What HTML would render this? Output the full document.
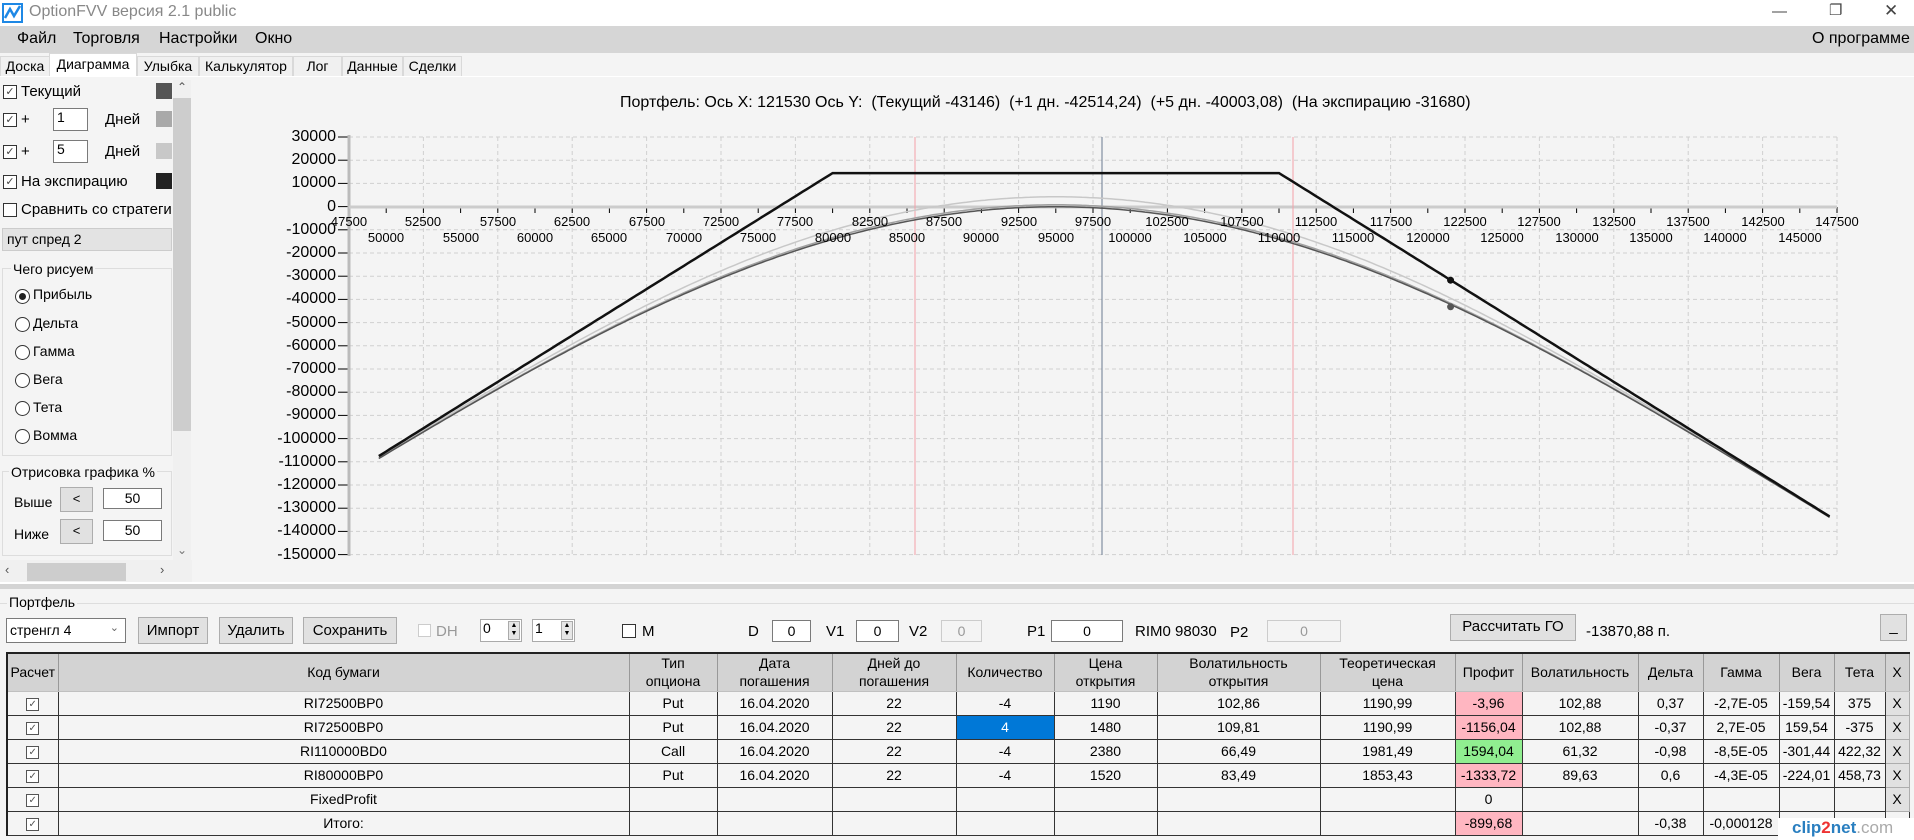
<!DOCTYPE html>
<html><head><meta charset="utf-8">
<style>
*{box-sizing:border-box;margin:0;padding:0}
body{width:1914px;height:840px;overflow:hidden;background:#f4f4f4;font-family:"Liberation Sans",sans-serif;font-size:15px;color:#000;position:relative}
.a{position:absolute;white-space:nowrap}
.cb{position:absolute;width:14px;height:14px;border:1px solid #333;background:#fff;font-size:11px;line-height:12px;text-align:center;color:#444}
.rb{position:absolute;width:15px;height:15px;border:1px solid #333;border-radius:50%;background:#fff}
.btn{position:absolute;background:#e1e1e1;border:1px solid #adadad;text-align:center;font-size:15px}
.inp{position:absolute;background:#fff;border:1px solid #7a7a7a;font-size:14px}
.yl{position:absolute;left:270px;width:66px;text-align:right;font-size:16px;height:18px;line-height:18px}
.xl{position:absolute;width:80px;text-align:center;font-size:13px;height:16px;line-height:16px}
.tab{position:absolute;top:56px;height:20px;border:1px solid #d9d9d9;border-bottom:none;font-size:14px;line-height:19px;text-align:center;background:#f0f0f0}
table{position:absolute;left:6px;top:652px;border-collapse:collapse;font-size:14px;border-top:2px solid #222;border-left:2px solid #222}
td{border:1px solid #333;text-align:center;height:24px;padding:0;background:#f4f4f4}
tr.h td{background:#d3d3d3;height:38px;line-height:18px;border-color:#fff #c0c0c0 #c0c0c0 #c0c0c0;border-right:1px solid #999}
.pk{background:#ffb6c1!important}.gr{background:#90ee90!important}.bl{background:#0078d7!important;color:#fff}
.xb{background:#e1e1e1!important;border:1px solid #adadad}
.chk{display:inline-block;width:13px;height:13px;border:1px solid #555;background:#fff;font-size:10px;line-height:11px;color:#555;vertical-align:middle}
</style></head><body>
<!-- title bar -->
<div class="a" style="left:0;top:0;width:1914px;height:26px;background:#fff"></div>
<svg class="a" style="left:2px;top:3px" width="22" height="20"><rect x="1" y="1" width="19" height="18" fill="none" stroke="#1e88e5" stroke-width="2"/><path d="M3 15 L8 6 L12 13 L18 3" fill="none" stroke="#1e88e5" stroke-width="2.5"/></svg>
<div class="a" style="left:29px;top:3px;font-size:16px;color:#888">OptionFVV версия 2.1 public</div>
<div class="a" style="left:1772px;top:3px;font-size:15px;color:#444">&#8212;</div>
<div class="a" style="left:1829px;top:1px;font-size:15px;color:#444">&#10064;</div>
<div class="a" style="left:1884px;top:1px;font-size:17px;color:#444">&#10005;</div>
<!-- menu -->
<div class="a" style="left:0;top:26px;width:1914px;height:27px;background:#d6d6d6"></div>
<div class="a" style="left:17px;top:30px;font-size:16px">Файл</div>
<div class="a" style="left:73px;top:30px;font-size:16px">Торговля</div>
<div class="a" style="left:159px;top:30px;font-size:16px">Настройки</div>
<div class="a" style="left:255px;top:30px;font-size:16px">Окно</div>
<div class="a" style="left:1812px;top:30px;font-size:16px">О программе</div>
<!-- tabs -->
<div class="tab" style="left:0;width:50px">Доска</div>
<div class="tab" style="left:49px;width:88px;top:53px;height:24px;background:#fff;line-height:20px">Диаграмма</div>
<div class="tab" style="left:137px;width:62px">Улыбка</div>
<div class="tab" style="left:199px;width:94px">Калькулятор</div>
<div class="tab" style="left:293px;width:49px">Лог</div>
<div class="tab" style="left:342px;width:61px">Данные</div>
<div class="tab" style="left:403px;width:59px">Сделки</div>
<div class="a" style="left:0;top:76px;width:1914px;height:1px;background:#fff"></div>
<!-- left panel -->
<div class="cb" style="left:3px;top:85px">&#10003;</div><div class="a" style="left:21px;top:83px">Текущий</div>
<div class="a" style="left:156px;top:83px;width:16px;height:16px;background:#555"></div>
<div class="cb" style="left:3px;top:113px">&#10003;</div><div class="a" style="left:21px;top:111px">+</div>
<div class="inp" style="left:53px;top:108px;width:35px;height:23px;padding-left:3px">1</div><div class="a" style="left:105px;top:111px">Дней</div>
<div class="a" style="left:156px;top:111px;width:16px;height:16px;background:#a9a9a9"></div>
<div class="cb" style="left:3px;top:145px">&#10003;</div><div class="a" style="left:21px;top:143px">+</div>
<div class="inp" style="left:53px;top:140px;width:35px;height:23px;padding-left:3px">5</div><div class="a" style="left:105px;top:143px">Дней</div>
<div class="a" style="left:156px;top:143px;width:16px;height:16px;background:#c8c8c8"></div>
<div class="cb" style="left:3px;top:175px">&#10003;</div><div class="a" style="left:21px;top:173px">На экспирацию</div>
<div class="a" style="left:156px;top:173px;width:16px;height:16px;background:#222"></div>
<div class="cb" style="left:3px;top:203px"></div><div class="a" style="left:21px;top:201px;width:151px;overflow:hidden">Сравнить со стратегие</div>
<div class="a" style="left:2px;top:228px;width:170px;height:23px;background:#e3e3e3;border:1px solid #ccc;padding:2px 4px;font-size:14px">пут спред 2</div>
<div class="a" style="left:2px;top:268px;width:170px;height:188px;border:1px solid #ddd"></div>
<div class="a" style="left:11px;top:261px;background:#f4f4f4;font-size:14px;padding:0 2px">Чего рисуем</div>
<div class="rb" style="left:15px;top:289px"></div><div class="a" style="left:19px;top:293px;width:7px;height:7px;border-radius:50%;background:#222"></div><div class="a" style="left:33px;top:286px;font-size:14px">Прибыль</div>
<div class="rb" style="left:15px;top:317px"></div><div class="a" style="left:33px;top:315px;font-size:14px">Дельта</div>
<div class="rb" style="left:15px;top:345px"></div><div class="a" style="left:33px;top:343px;font-size:14px">Гамма</div>
<div class="rb" style="left:15px;top:373px"></div><div class="a" style="left:33px;top:371px;font-size:14px">Вега</div>
<div class="rb" style="left:15px;top:401px"></div><div class="a" style="left:33px;top:399px;font-size:14px">Тета</div>
<div class="rb" style="left:15px;top:429px"></div><div class="a" style="left:33px;top:427px;font-size:14px">Вомма</div>
<div class="a" style="left:2px;top:471px;width:170px;height:85px;border:1px solid #ddd"></div>
<div class="a" style="left:9px;top:464px;background:#f4f4f4;font-size:14px;padding:0 2px">Отрисовка графика %</div>
<div class="a" style="left:14px;top:494px;font-size:14px">Выше</div>
<div class="btn" style="left:60px;top:487px;width:33px;height:25px;line-height:22px;font-size:13px">&lt;</div>
<div class="inp" style="left:103px;top:488px;width:59px;height:21px;text-align:center;line-height:19px">50</div>
<div class="a" style="left:14px;top:526px;font-size:14px">Ниже</div>
<div class="btn" style="left:60px;top:519px;width:33px;height:25px;line-height:22px;font-size:13px">&lt;</div>
<div class="inp" style="left:103px;top:520px;width:59px;height:21px;text-align:center;line-height:19px">50</div>
<div class="a" style="left:173px;top:80px;width:18px;height:480px;background:#f0f0f0"></div>
<div class="a" style="left:173px;top:98px;width:18px;height:333px;background:#cdcdcd"></div>
<div class="a" style="left:177px;top:80px;font-size:12px;color:#555">&#8963;</div>
<div class="a" style="left:177px;top:543px;font-size:12px;color:#777">&#8964;</div>
<div class="a" style="left:0;top:560px;width:192px;height:22px;background:#f0f0f0"></div>
<div class="a" style="left:27px;top:563px;width:99px;height:18px;background:#cdcdcd"></div>
<div class="a" style="left:5px;top:562px;font-size:13px;color:#555">&#8249;</div>
<div class="a" style="left:160px;top:562px;font-size:13px;color:#555">&#8250;</div>
<!-- chart -->
<div class="a" style="left:620px;top:94px;font-size:16px">Портфель: Ось X: 121530 Ось Y:&nbsp; (Текущий -43146)&nbsp; (+1 дн. -42514,24)&nbsp; (+5 дн. -40003,08)&nbsp; (На экспирацию -31680)</div>
<svg id="ch" class="a" style="left:0;top:0" width="1914" height="600"></svg>
<div class="yl" style="top:128px">30000</div><div class="yl" style="top:151px">20000</div><div class="yl" style="top:174px">10000</div><div class="yl" style="top:198px">0</div>
<div class="yl" style="top:221px">-10000</div><div class="yl" style="top:244px">-20000</div><div class="yl" style="top:267px">-30000</div><div class="yl" style="top:290px">-40000</div>
<div class="yl" style="top:314px">-50000</div><div class="yl" style="top:337px">-60000</div><div class="yl" style="top:360px">-70000</div><div class="yl" style="top:383px">-80000</div>
<div class="yl" style="top:406px">-90000</div><div class="yl" style="top:430px">-100000</div><div class="yl" style="top:453px">-110000</div><div class="yl" style="top:476px">-120000</div>
<div class="yl" style="top:499px">-130000</div><div class="yl" style="top:522px">-140000</div><div class="yl" style="top:546px">-150000</div>
<div class="xl" style="left:309px;top:214px">47500</div><div class="xl" style="left:383px;top:214px">52500</div><div class="xl" style="left:458px;top:214px">57500</div><div class="xl" style="left:532px;top:214px">62500</div><div class="xl" style="left:607px;top:214px">67500</div><div class="xl" style="left:681px;top:214px">72500</div><div class="xl" style="left:755px;top:214px">77500</div><div class="xl" style="left:830px;top:214px">82500</div><div class="xl" style="left:904px;top:214px">87500</div><div class="xl" style="left:979px;top:214px">92500</div><div class="xl" style="left:1053px;top:214px">97500</div><div class="xl" style="left:1127px;top:214px">102500</div><div class="xl" style="left:1202px;top:214px">107500</div><div class="xl" style="left:1276px;top:214px">112500</div><div class="xl" style="left:1351px;top:214px">117500</div><div class="xl" style="left:1425px;top:214px">122500</div><div class="xl" style="left:1499px;top:214px">127500</div><div class="xl" style="left:1574px;top:214px">132500</div><div class="xl" style="left:1648px;top:214px">137500</div><div class="xl" style="left:1723px;top:214px">142500</div><div class="xl" style="left:1797px;top:214px">147500</div>
<div class="xl" style="left:346px;top:230px">50000</div><div class="xl" style="left:421px;top:230px">55000</div><div class="xl" style="left:495px;top:230px">60000</div><div class="xl" style="left:569px;top:230px">65000</div><div class="xl" style="left:644px;top:230px">70000</div><div class="xl" style="left:718px;top:230px">75000</div><div class="xl" style="left:793px;top:230px">80000</div><div class="xl" style="left:867px;top:230px">85000</div><div class="xl" style="left:941px;top:230px">90000</div><div class="xl" style="left:1016px;top:230px">95000</div><div class="xl" style="left:1090px;top:230px">100000</div><div class="xl" style="left:1165px;top:230px">105000</div><div class="xl" style="left:1239px;top:230px">110000</div><div class="xl" style="left:1313px;top:230px">115000</div><div class="xl" style="left:1388px;top:230px">120000</div><div class="xl" style="left:1462px;top:230px">125000</div><div class="xl" style="left:1537px;top:230px">130000</div><div class="xl" style="left:1611px;top:230px">135000</div><div class="xl" style="left:1685px;top:230px">140000</div><div class="xl" style="left:1760px;top:230px">145000</div>
<!-- splitter -->
<div class="a" style="left:0;top:582px;width:1914px;height:2px;background:#fff"></div>
<div class="a" style="left:0;top:584px;width:1914px;height:5px;background:#d4d4d4"></div>
<!-- portfolio -->
<div class="a" style="left:0;top:603px;width:1914px;height:1px;background:#ddd"></div>
<div class="a" style="left:7px;top:594px;font-size:14px;background:#f4f4f4;padding:0 2px">Портфель</div>
<div class="inp" style="left:6px;top:618px;width:120px;height:25px;padding:3px 3px;font-size:14px">стренгл 4<span style="position:absolute;right:6px;top:2px;color:#666;font-size:11px">&#8964;</span></div>
<div class="btn" style="left:138px;top:617px;width:70px;height:27px;line-height:25px">Импорт</div>
<div class="btn" style="left:219px;top:617px;width:74px;height:27px;line-height:25px">Удалить</div>
<div class="btn" style="left:303px;top:617px;width:94px;height:27px;line-height:25px">Сохранить</div>
<div class="a" style="left:418px;top:624px;width:13px;height:13px;border:1px solid #ccc;background:#fff"></div>
<div class="a" style="left:436px;top:623px;color:#999">DH</div>
<div class="inp" style="left:480px;top:619px;width:42px;height:23px;padding-left:2px;border-color:#aaa">0</div>
<div class="a" style="left:508px;top:621px;width:12px;height:19px;background:#e6e6e6;border:1px solid #aaa;font-size:7px;line-height:8px;text-align:center">&#9650;<br>&#9660;</div>
<div class="inp" style="left:532px;top:619px;width:43px;height:23px;padding-left:2px;border-color:#aaa">1</div>
<div class="a" style="left:561px;top:621px;width:12px;height:19px;background:#e6e6e6;border:1px solid #aaa;font-size:7px;line-height:8px;text-align:center">&#9650;<br>&#9660;</div>
<div class="a" style="left:622px;top:624px;width:14px;height:14px;border:1px solid #333;background:#fff"></div>
<div class="a" style="left:642px;top:623px">M</div>
<div class="a" style="left:748px;top:623px">D</div><div class="inp" style="left:772px;top:620px;width:39px;height:22px;text-align:center;line-height:20px">0</div>
<div class="a" style="left:826px;top:623px">V1</div><div class="inp" style="left:856px;top:620px;width:43px;height:22px;text-align:center;line-height:20px">0</div>
<div class="a" style="left:909px;top:623px">V2</div><div class="inp" style="left:941px;top:620px;width:41px;height:22px;text-align:center;line-height:20px;border-color:#ccc;background:#f4f4f4;color:#999">0</div>
<div class="a" style="left:1027px;top:623px">P1</div><div class="inp" style="left:1051px;top:620px;width:72px;height:22px;text-align:center;line-height:20px">0</div>
<div class="a" style="left:1135px;top:623px">RIM0 98030</div>
<div class="a" style="left:1230px;top:624px">P2</div><div class="inp" style="left:1267px;top:620px;width:74px;height:22px;text-align:center;line-height:20px;border-color:#ccc;background:#f4f4f4;color:#999">0</div>
<div class="btn" style="left:1450px;top:614px;width:126px;height:27px;line-height:24px">Рассчитать ГО</div>
<div class="a" style="left:1586px;top:623px">-13870,88 п.</div>
<div class="btn" style="left:1880px;top:614px;width:27px;height:27px;line-height:24px">_</div>
<table>
<colgroup><col style="width:51px"><col style="width:571px"><col style="width:88px"><col style="width:115px"><col style="width:124px"><col style="width:98px"><col style="width:103px"><col style="width:163px"><col style="width:135px"><col style="width:67px"><col style="width:116px"><col style="width:65px"><col style="width:76px"><col style="width:55px"><col style="width:51px"><col style="width:24px"></colgroup>
<tr class="h"><td>Расчет</td><td>Код бумаги</td><td>Тип<br>опциона</td><td>Дата<br>погашения</td><td>Дней до<br>погашения</td><td>Количество</td><td>Цена<br>открытия</td><td>Волатильность<br>открытия</td><td>Теоретическая<br>цена</td><td>Профит</td><td>Волатильность</td><td>Дельта</td><td>Гамма</td><td>Вега</td><td>Тета</td><td>X</td></tr>
<tr><td><span class="chk">&#10003;</span></td><td>RI72500BP0</td><td>Put</td><td>16.04.2020</td><td>22</td><td>-4</td><td>1190</td><td>102,86</td><td>1190,99</td><td class="pk">-3,96</td><td>102,88</td><td>0,37</td><td>-2,7E-05</td><td>-159,54</td><td>375</td><td class="xb">X</td></tr>
<tr><td><span class="chk">&#10003;</span></td><td>RI72500BP0</td><td>Put</td><td>16.04.2020</td><td>22</td><td class="bl">4</td><td>1480</td><td>109,81</td><td>1190,99</td><td class="pk">-1156,04</td><td>102,88</td><td>-0,37</td><td>2,7E-05</td><td>159,54</td><td>-375</td><td class="xb">X</td></tr>
<tr><td><span class="chk">&#10003;</span></td><td>RI110000BD0</td><td>Call</td><td>16.04.2020</td><td>22</td><td>-4</td><td>2380</td><td>66,49</td><td>1981,49</td><td class="gr">1594,04</td><td>61,32</td><td>-0,98</td><td>-8,5E-05</td><td>-301,44</td><td>422,32</td><td class="xb">X</td></tr>
<tr><td><span class="chk">&#10003;</span></td><td>RI80000BP0</td><td>Put</td><td>16.04.2020</td><td>22</td><td>-4</td><td>1520</td><td>83,49</td><td>1853,43</td><td class="pk">-1333,72</td><td>89,63</td><td>0,6</td><td>-4,3E-05</td><td>-224,01</td><td>458,73</td><td class="xb">X</td></tr>
<tr><td><span class="chk">&#10003;</span></td><td>FixedProfit</td><td></td><td></td><td></td><td></td><td></td><td></td><td></td><td>0</td><td></td><td></td><td></td><td></td><td></td><td class="xb">X</td></tr>
<tr><td><span class="chk">&#10003;</span></td><td>Итого:</td><td></td><td></td><td></td><td></td><td></td><td></td><td></td><td class="pk">-899,68</td><td></td><td>-0,38</td><td>-0,000128</td><td style="text-align:left">-5</td><td></td><td></td></tr>
</table>
<div class="a" style="left:1778px;top:818px;width:136px;height:22px;background:#fff;font-size:17px;color:#2a7fc0;padding-left:14px;font-weight:bold">clip<span style="color:#e33">2</span>net<span style="color:#aaa;font-weight:normal">.com</span></div>
<script>
(function(){
var X=function(p){return 349+(p-47500)*0.014880;},Y=function(v){return 206.7-v*0.00232;};
var s='';
for(var i=0;i<=18;i++){var y=137+23.2*i;s+='<line x1="349" y1="'+y+'" x2="1837" y2="'+y+'" stroke="#d0d0d0" stroke-dasharray="4,3"/>';s+='<line x1="338" y1="'+y+'" x2="349" y2="'+y+'" stroke="#000"/>';}
for(var k=0;k<=20;k++){var x=349+74.4*k;s+='<line x1="'+x+'" y1="137" x2="'+x+'" y2="555" stroke="#d0d0d0" stroke-dasharray="4,3"/>';}
for(var k=0;k<=40;k++){var x=349+37.2*k;s+='<line x1="'+x+'" y1="207" x2="'+x+'" y2="213" stroke="#000"/>';}
s+='<line x1="349" y1="135" x2="349" y2="556" stroke="#bbb" stroke-width="3"/>';
s+='<line x1="349" y1="207" x2="1837" y2="207" stroke="#ccc" stroke-width="3"/>';
s+='<line x1="915" y1="137" x2="915" y2="555" stroke="#f4a0a8"/><line x1="1293" y1="137" x2="1293" y2="555" stroke="#f4a0a8"/><line x1="1102" y1="137" x2="1102" y2="555" stroke="#6a7a90"/>';
function phi(z){return Math.exp(-z*z/2)/2.5066283;}
function Phi(z){var t=1/(1+0.2316419*Math.abs(z));var d=0.3989423*Math.exp(-z*z/2);var p=d*t*(0.3193815+t*(-0.3565638+t*(1.781478+t*(-1.821256+t*1.330274))));return z>0?1-p:p;}
function val(S,sg){var zc=(S-110000)/sg,zp=(80000-S)/sg;var c=(S-110000)*Phi(zc)+sg*phi(zc);var p=(80000-S)*Phi(zp)+sg*phi(zp);return 14500-4*(c+p);}
function path(sg,col,w){var d='';for(var S=49500;S<=147000;S+=250){var v=sg?val(S,sg):14500-4*Math.max(80000-S,0)-4*Math.max(S-110000,0);d+=(d?'L':'M')+X(S).toFixed(1)+' '+Y(v).toFixed(1);}return '<path d="'+d+'" fill="none" stroke="'+col+'" stroke-width="'+w+'"/>';}
s+=path(15120,'#c8c8c8',1.5)+path(16805,'#a0a0a0',1.5)+path(17200,'#555',1.5)+path(0,'#111',2.5);
s+='<circle cx="'+X(121530)+'" cy="'+Y(-31680)+'" r="3.5" fill="#111"/><circle cx="'+X(121530)+'" cy="'+Y(-43146)+'" r="3.5" fill="#555"/>';
document.getElementById('ch').innerHTML=s;
})();
</script>
</body></html>
